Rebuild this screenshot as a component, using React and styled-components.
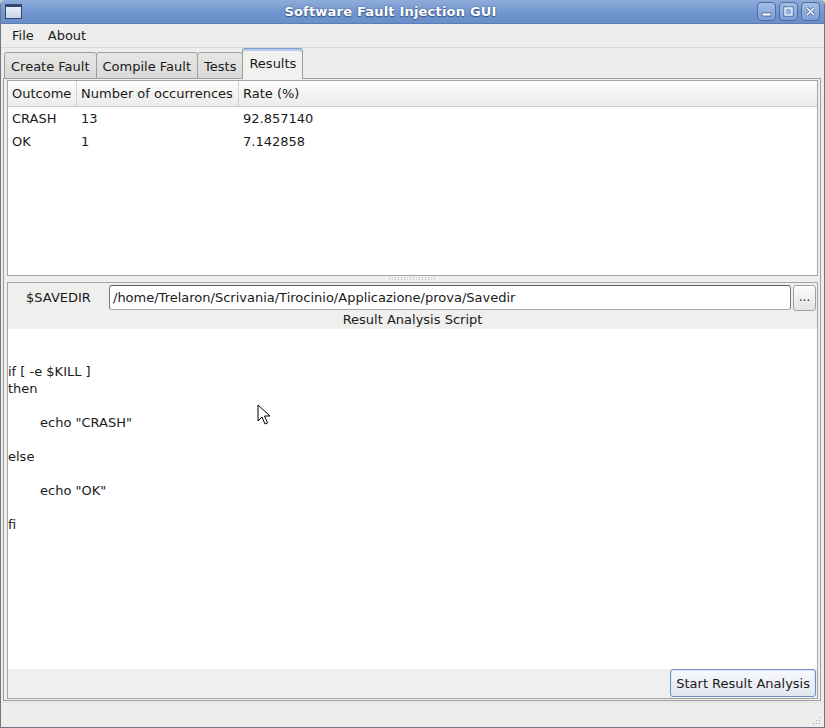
import React from "react";
import styled, { createGlobalStyle } from "styled-components";

const Global = createGlobalStyle`
  html, body { margin: 0; padding: 0; background: #d6d6d6; }
  body { font-family: "DejaVu Sans", "Liberation Sans", sans-serif; font-size: 13px; color: #1a1a1a; }
  * { box-sizing: border-box; }
`;

const Window = styled.div`
  position: relative;
  width: 825px;
  height: 728px;
  display: flex;
  flex-direction: column;
  background: #ededeb;
  border: 1px solid #6f7785;
  border-top: none;
  border-radius: 5px 5px 0 0;
  overflow: hidden;
`;

const TitleBar = styled.div`
  height: 24px;
  flex: none;
  display: flex;
  align-items: center;
  padding: 0 4px 0 5px;
  background: linear-gradient(#8eacd9, #7196ce 55%, #6a8fc9);
  border-bottom: 1px solid #5a7db5;
  margin: 0 -1px;
`;

const TitleIcon = styled.div`
  width: 17px;
  height: 15px;
  border: 1px solid #334a70;
  background: linear-gradient(#e8eef8, #c8d3e5);
  border-top-width: 3px;
`;

const Title = styled.div`
  flex: 1;
  text-align: center;
  color: #fff;
  font-weight: bold;
  font-size: 13px;
  letter-spacing: 0.2px;
  text-shadow: 0 1px 1px #3b5584, 0 0 2px #3b5584;
  padding-left: 2px;
`;

const WinButtons = styled.div`
  display: flex;
  gap: 3px;
  margin-right: 1px;
`;

const WinButton = styled.div`
  width: 19px;
  height: 19px;
  border: 1px solid #4b6ea6;
  border-radius: 4px;
  background: linear-gradient(#a5bfe4, #7c9fd4);
  display: flex;
  align-items: center;
  justify-content: center;
`;

const MenuBar = styled.div`
  height: 24px;
  flex: none;
  display: flex;
  align-items: center;
  padding: 0 0 0 4px;
  border-bottom: 1px solid #d8d8d6;
`;

const MenuItem = styled.div`
  padding: 0 7px;
  font-size: 13px;
`;

const TabBar = styled.div`
  height: 31px;
  flex: none;
  display: flex;
  align-items: flex-end;
  padding-left: 3px;
  position: relative;
  z-index: 2;
  margin-bottom: -1px;
`;

const Tab = styled.div`
  height: ${p => (p.$active ? "31px" : "27px")};
  padding: ${p => (p.$active ? "7px 6px 0" : "6px 6px 0")};
  margin-right: -1px;
  border: 1px solid #9d9d9b;
  border-bottom: ${p => (p.$active ? "none" : "1px solid #9d9d9b")};
  border-top-color: ${p => (p.$active ? "#7e9ccd" : "#9d9d9b")};
  border-radius: 3px 3px 0 0;
  background: ${p => (p.$active ? "linear-gradient(#e6ecf5, #f1f1ef 4px)" : "linear-gradient(#e6e6e4, #dadad8)")};
  font-size: 13px;
  white-space: nowrap;
  box-shadow: ${p => (p.$active ? "inset 0 2px 0 #b9cbe6" : "none")};
`;

const TabPane = styled.div`
  flex: 1;
  margin: 0 3px 0 2px;
  border: 1px solid #9d9d9b;
  background: #efefed;
  padding: 1px 2px 0 3px;
  display: flex;
  flex-direction: column;
  min-height: 0;
`;

const TableFrame = styled.div`
  height: 196px;
  flex: none;
  border: 1px solid #a4a4a2;
  background: #fff;
  display: flex;
  flex-direction: column;
`;

const HeaderRow = styled.div`
  display: flex;
  height: 26px;
  background: linear-gradient(#fbfbfa, #ececea);
  border-bottom: 1px solid #c9c9c7;
`;

const HeaderCell = styled.div`
  width: ${p => p.$w};
  flex: ${p => (p.$grow ? 1 : "none")};
  padding-left: 4px;
  display: flex;
  align-items: center;
  border-right: ${p => (p.$grow ? "none" : "1px solid #d2d2d0")};
  font-size: 13px;
`;

const Row = styled.div`
  display: flex;
  height: 23px;
  align-items: center;
`;

const Cell = styled.div`
  width: ${p => p.$w};
  flex: ${p => (p.$grow ? 1 : "none")};
  padding-left: 4px;
  font-size: 13px;
`;

const Splitter = styled.div`
  height: 6px;
  flex: none;
  display: flex;
  justify-content: center;
  align-items: center;
`;

const Grip = styled.div`
  width: 48px;
  height: 4px;
  background-image: radial-gradient(circle at 0.5px 0.5px, #c4c4c2 0.5px, transparent 0.6px);
  background-size: 3px 2px;
`;

const LowerPanel = styled.div`
  flex: 1;
  border: 1px solid #a4a4a2;
  display: flex;
  flex-direction: column;
  min-height: 0;
  margin-bottom: 1px;
`;

const PathRow = styled.div`
  height: 28px;
  flex: none;
  display: flex;
  align-items: center;
  padding-right: 1px;
`;

const PathLabel = styled.div`
  width: 101px;
  text-align: center;
  font-size: 13px;
`;

const PathInput = styled.div`
  flex: 1;
  height: 25px;
  margin-top: 1px;
  border: 1px solid #7b7b79;
  border-top-color: #5e5e5c;
  border-bottom-color: #a8a8a6;
  border-radius: 3px;
  background: #fff;
  padding-left: 3px;
  display: flex;
  align-items: center;
  font-size: 13px;
`;

const SmallButton = styled.div`
  width: 23px;
  height: 26px;
  margin-left: 2px;
  margin-top: 2px;
  border: 1px solid #a2a2a0;
  border-radius: 3px;
  background: linear-gradient(#fcfcfb, #e4e4e2);
  display: flex;
  align-items: center;
  justify-content: center;
  font-size: 12px;
  padding-bottom: 2px;
`;

const ScriptLabel = styled.div`
  height: 18px;
  flex: none;
  text-align: center;
  font-size: 13px;
  line-height: 18px;
`;

const ScriptArea = styled.pre`
  flex: 1;
  margin: 0;
  background: #fff;
  font-family: "DejaVu Sans", "Liberation Sans", sans-serif;
  font-size: 13px;
  line-height: 17px;
  tab-size: 32px;
  white-space: pre;
  padding: 0;
  overflow: hidden;
`;

const ButtonBar = styled.div`
  height: 29px;
  flex: none;
  display: flex;
  justify-content: flex-end;
  align-items: flex-start;
  padding-right: 1px;
`;

const ActionButton = styled.div`
  height: 28px;
  padding: 0 5px;
  border: 1px solid #6f8fbf;
  border-radius: 3px;
  background: linear-gradient(#f7f9fc, #e3e7ee);
  box-shadow: inset 0 0 0 1px #dfe8f5;
  display: flex;
  align-items: center;
  font-size: 13px;
`;

const StatusBar = styled.div`
  height: 25px;
  flex: none;
  border-top: 1px solid #e2e2e0;
  margin-top: 1px;
  position: relative;
`;

const SizeGrip = styled.div`
  position: absolute;
  right: 2px;
  bottom: 1px;
  width: 13px;
  height: 13px;
  background-image: radial-gradient(circle, #a9a9a7 0.7px, transparent 0.9px);
  background-size: 3px 3px;
  clip-path: polygon(100% 0, 100% 100%, 0 100%);
`;

const Cursor = styled.svg`
  position: absolute;
  left: 256px;
  top: 404px;
  pointer-events: none;
`;

const script = '\n\nif [ -e $KILL ]\nthen\n\n\techo "CRASH"\n\nelse\n\n\techo "OK"\n\nfi';

const rows = [
  ["CRASH", "13", "92.857140"],
  ["OK", "1", "7.142858"],
];

export default function App() {
  return (
    <>
      <Global />
      <Window>
        <TitleBar>
          <TitleIcon />
          <Title>Software Fault Injection GUI</Title>
          <WinButtons>
            <WinButton>
              <svg width="11" height="11" viewBox="0 0 11 11">
                <rect x="1" y="7" width="9" height="3" fill="#fff" stroke="#3d5f96" strokeWidth="0.8" />
              </svg>
            </WinButton>
            <WinButton>
              <svg width="11" height="11" viewBox="0 0 11 11">
                <rect x="1" y="1" width="9" height="9" fill="none" stroke="#3d5f96" strokeWidth="1" />
                <rect x="2" y="2" width="7" height="7" fill="none" stroke="#fff" strokeWidth="1.2" />
              </svg>
            </WinButton>
            <WinButton>
              <svg width="11" height="11" viewBox="0 0 11 11">
                <path d="M2 2 L9 9 M9 2 L2 9" stroke="#3d5f96" strokeWidth="3" />
                <path d="M2 2 L9 9 M9 2 L2 9" stroke="#fff" strokeWidth="1.6" />
              </svg>
            </WinButton>
          </WinButtons>
        </TitleBar>
        <MenuBar>
          <MenuItem>File</MenuItem>
          <MenuItem>About</MenuItem>
        </MenuBar>
        <TabBar>
          <Tab>Create Fault</Tab>
          <Tab>Compile Fault</Tab>
          <Tab>Tests</Tab>
          <Tab $active>Results</Tab>
        </TabBar>
        <TabPane>
          <TableFrame>
            <HeaderRow>
              <HeaderCell $w="69px">Outcome</HeaderCell>
              <HeaderCell $w="162px">Number of occurrences</HeaderCell>
              <HeaderCell $grow>Rate (%)</HeaderCell>
            </HeaderRow>
            {rows.map(r => (
              <Row key={r[0]}>
                <Cell $w="69px">{r[0]}</Cell>
                <Cell $w="162px">{r[1]}</Cell>
                <Cell $grow>{r[2]}</Cell>
              </Row>
            ))}
          </TableFrame>
          <Splitter>
            <Grip />
          </Splitter>
          <LowerPanel>
            <PathRow>
              <PathLabel>$SAVEDIR</PathLabel>
              <PathInput>/home/Trelaron/Scrivania/Tirocinio/Applicazione/prova/Savedir</PathInput>
              <SmallButton>...</SmallButton>
            </PathRow>
            <ScriptLabel>Result Analysis Script</ScriptLabel>
            <ScriptArea>{script}</ScriptArea>
            <ButtonBar>
              <ActionButton>Start Result Analysis</ActionButton>
            </ButtonBar>
          </LowerPanel>
        </TabPane>
        <StatusBar>
          <SizeGrip />
        </StatusBar>
        <Cursor width="14" height="22" viewBox="0 0 14 22">
          <path d="M1 1 L1 17 L5 13 L8 20 L10.5 19 L7.5 12 L13 12 Z" fill="#fff" stroke="#000" strokeWidth="1" strokeLinejoin="round" />
        </Cursor>
      </Window>
    </>
  );
}
